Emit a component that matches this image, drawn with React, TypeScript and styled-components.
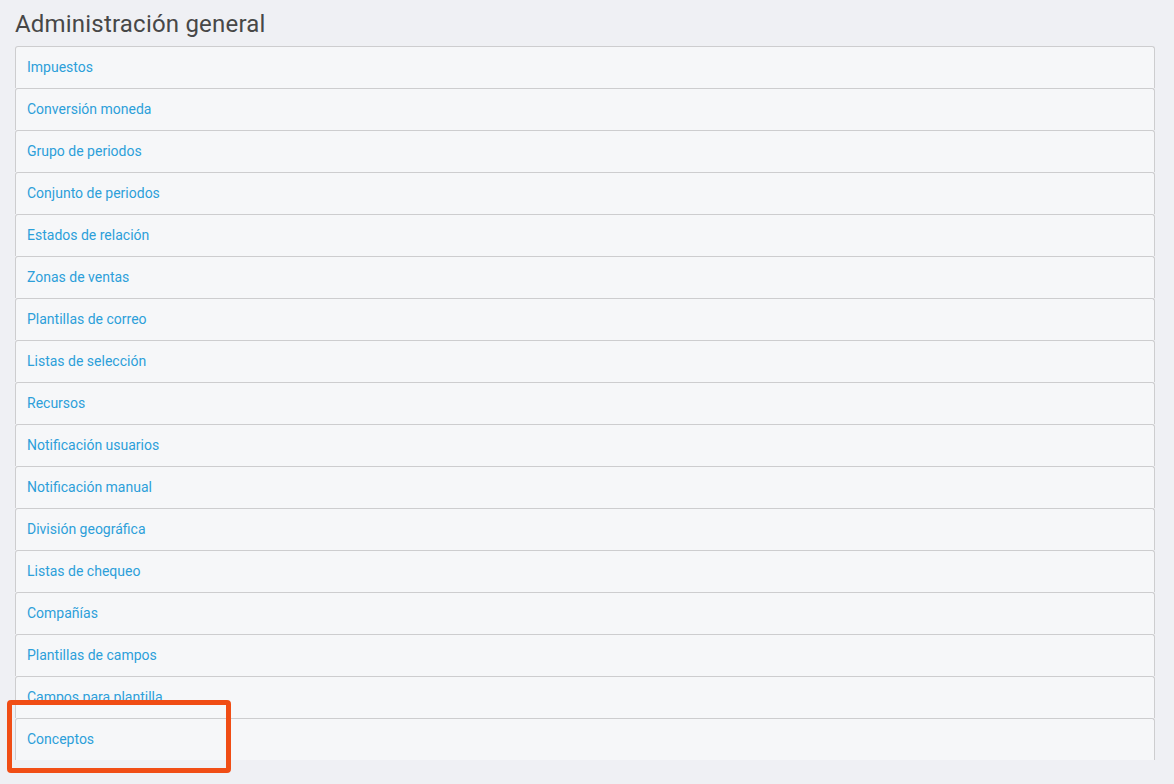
import React from "react";
import styled, { createGlobalStyle } from "styled-components";

const Global = createGlobalStyle`
  html, body { margin: 0; padding: 0; background: #eff0f4; }
  body { font-family: Roboto, "Noto Sans", "Liberation Sans", sans-serif; }
`;

const Page = styled.div`
  position: relative;
  padding: 10px 19px 24px 15px;
  height: 784px;
  box-sizing: border-box;
  overflow: hidden;
`;

const Title = styled.h1`
  margin: 0 0 8px 0;
  font-size: 24px;
  font-weight: 400;
  line-height: 28px;
  letter-spacing: 0.2px;
  color: #474747;
`;

const List = styled.div`
  display: flex;
  flex-direction: column;
`;

const Item = styled.div`
  height: 42px;
  box-sizing: border-box;
  display: flex;
  align-items: center;
  padding: 0 11px 2px;
  background: #f6f7f9;
  border: 1px solid #cdcdcf;
  border-bottom: none;
  border-radius: 3px 3px 0 0;
`;

const Link = styled.a`
  font-size: 14px;
  color: #2d9fd9;
  text-decoration: none;
  cursor: pointer;
`;

const Highlight = styled.div`
  position: absolute;
  left: 7px;
  top: 700px;
  width: 224px;
  height: 73px;
  box-sizing: border-box;
  border: 5px solid #f04d15;
  border-radius: 4px;
  pointer-events: none;
`;

const items = [
  "Impuestos",
  "Conversión moneda",
  "Grupo de periodos",
  "Conjunto de periodos",
  "Estados de relación",
  "Zonas de ventas",
  "Plantillas de correo",
  "Listas de selección",
  "Recursos",
  "Notificación usuarios",
  "Notificación manual",
  "División geográfica",
  "Listas de chequeo",
  "Compañías",
  "Plantillas de campos",
  "Campos para plantilla",
  "Conceptos",
];

export default function App() {
  return (
    <>
      <Global />
      <Page>
        <Title>Administración general</Title>
        <List>
          {items.map((t) => (
            <Item key={t}>
              <Link>{t}</Link>
            </Item>
          ))}
        </List>
        <Highlight />
      </Page>
    </>
  );
}
